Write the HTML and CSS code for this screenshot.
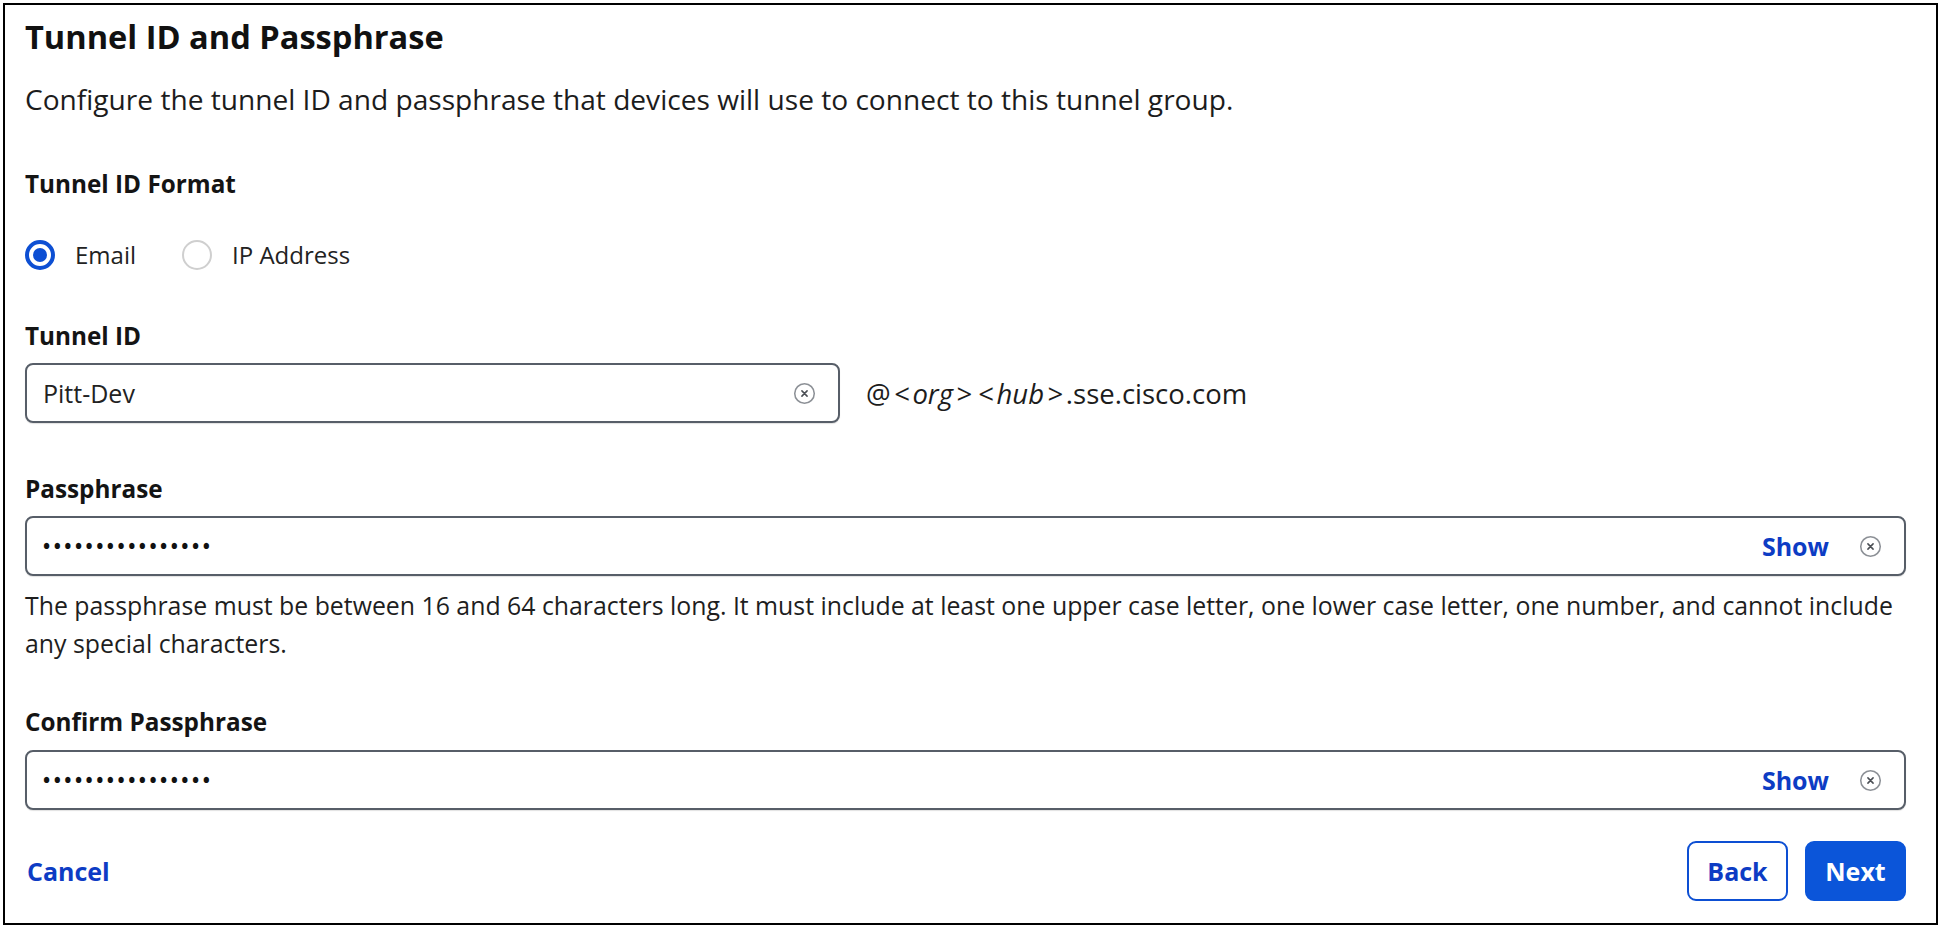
FILE: index.html
```html
<!DOCTYPE html>
<html lang="en">
<head>
<meta charset="utf-8">
<title>Tunnel ID and Passphrase</title>
<link rel="stylesheet" href="styles.css">
</head>
<body>
<div class="frame">
  <h1 class="title">Tunnel ID and Passphrase</h1>
  <p class="desc">Configure the tunnel ID and passphrase that devices will use to connect to this tunnel group.</p>

  <div class="label label-format">Tunnel ID Format</div>
  <div class="radios">
    <div class="radio"><span class="radio-dot radio-on"></span><span class="radio-text">Email</span></div>
    <div class="radio"><span class="radio-dot"></span><span class="radio-text">IP Address</span></div>
  </div>

  <div class="label label-id">Tunnel ID</div>
  <div class="id-row">
    <div class="field field-short">
      <span class="value">Pitt-Dev</span>
      <svg class="clear" viewBox="0 0 24 24" width="23" height="23" aria-hidden="true">
        <circle cx="12" cy="12" r="10.2" fill="none" stroke="#8c9096" stroke-width="1.6"/>
        <path d="M9.3 9.3 L14.7 14.7 M14.7 9.3 L9.3 14.7" stroke="#4a4e54" stroke-width="1.6" stroke-linecap="round"/>
      </svg>
    </div>
    <span class="suffix">@<i><span class="br">&lt;</span>org<span class="br">&gt;</span><span class="br">&lt;</span>hub<span class="br">&gt;</span></i>.sse.cisco.com</span>
  </div>

  <div class="label label-pass">Passphrase</div>
  <div class="field field-pass">
    <span class="dots">••••••••••••••••</span>
    <span class="field-actions">
      <span class="show">Show</span>
      <svg class="clear" viewBox="0 0 24 24" width="23" height="23" aria-hidden="true">
        <circle cx="12" cy="12" r="10.2" fill="none" stroke="#8c9096" stroke-width="1.6"/>
        <path d="M9.3 9.3 L14.7 14.7 M14.7 9.3 L9.3 14.7" stroke="#4a4e54" stroke-width="1.6" stroke-linecap="round"/>
      </svg>
    </span>
  </div>
  <p class="help">The passphrase must be between 16 and 64 characters long. It must include at least one upper case letter, one lower case letter, one number, and cannot include any special characters.</p>

  <div class="label label-confirm">Confirm Passphrase</div>
  <div class="field field-pass field-confirm">
    <span class="dots">••••••••••••••••</span>
    <span class="field-actions">
      <span class="show">Show</span>
      <svg class="clear" viewBox="0 0 24 24" width="23" height="23" aria-hidden="true">
        <circle cx="12" cy="12" r="10.2" fill="none" stroke="#8c9096" stroke-width="1.6"/>
        <path d="M9.3 9.3 L14.7 14.7 M14.7 9.3 L9.3 14.7" stroke="#4a4e54" stroke-width="1.6" stroke-linecap="round"/>
      </svg>
    </span>
  </div>

  <div class="footer">
    <span class="cancel">Cancel</span>
    <div class="actions">
      <button class="btn btn-outline" type="button">Back</button>
      <button class="btn btn-primary" type="button">Next</button>
    </div>
  </div>
</div>
</body>
</html>
```

FILE: styles.css
```css
html, body {
  margin: 0;
  padding: 0;
  background: #ffffff;
}

body {
  font-family: "Open Sans", "Noto Sans", sans-serif;
  color: #1c1c1c;
}

.frame {
  box-sizing: border-box;
  margin: 3px 0 0 3px;
  width: 1935px;
  height: 922px;
  border: 2px solid #000;
  padding: 12px 30px 0 20px;
  display: flex;
  flex-direction: column;
}

.title {
  margin: 0;
  font-size: 32.6px;
  line-height: 40px;
  font-weight: 700;
  color: #111;
}

.desc {
  margin: 23px 0 0;
  font-size: 28.1px;
  line-height: 38px;
  color: #1c1c1c;
}

.label {
  font-size: 24.3px;
  line-height: 34px;
  font-weight: 700;
  color: #141414;
}

.label-format { margin-top: 49px; }
.label-id { margin-top: 47px; }
.label-pass { margin-top: 49px; }
.label-confirm { margin-top: 43px; }

.radios {
  margin-top: 37px;
  height: 34px;
  display: flex;
  align-items: center;
  gap: 46px;
}

.radio {
  display: flex;
  align-items: center;
  gap: 20px;
}

.radio-dot {
  box-sizing: border-box;
  width: 30px;
  height: 30px;
  border-radius: 50%;
  border: 2px solid #cfcfcf;
  background: #fff;
  display: flex;
  align-items: center;
  justify-content: center;
}

.radio-on {
  border: 4px solid #0d4fd3;
}

.radio-on::after {
  content: "";
  width: 14px;
  height: 14px;
  border-radius: 50%;
  background: #0d4fd3;
}

.radio-text {
  font-size: 24px;
  line-height: 34px;
  color: #222;
}

.id-row {
  margin-top: 10px;
  display: flex;
  align-items: center;
  gap: 26px;
}

.field {
  box-sizing: border-box;
  height: 60px;
  border: 2px solid #575e68;
  border-radius: 8px;
  padding: 0 22px 0 16px;
  display: flex;
  align-items: center;
  justify-content: space-between;
  background: #fff;
  box-shadow: 0 1px 1px rgba(0, 0, 0, 0.12);
}

.field-short {
  width: 815px;
}

.field-pass {
  margin-top: 10px;
  width: 100%;
}

.field-confirm {
  margin-top: 11px;
}

.value {
  font-size: 25px;
  color: #222;
}

.clear {
  display: block;
  flex: none;
}

.suffix {
  font-size: 27.5px;
  color: #1c1c1c;
}

.suffix i {
  font-style: italic;
}

.suffix .br {
  margin: 0 3px;
}

.dots {
  font-size: 19px;
  letter-spacing: 3.5px;
  color: #111;
  font-weight: 700;
}

.field-actions {
  display: flex;
  align-items: center;
  gap: 30px;
}

.show {
  font-size: 25px;
  font-weight: 700;
  color: #0d3cc4;
}

.help {
  margin: 10px 0 0;
  font-size: 24.85px;
  line-height: 38px;
  color: #1e1e1e;
}

.footer {
  margin-top: 31px;
  display: flex;
  align-items: center;
  justify-content: space-between;
}

.cancel {
  margin-left: 2px;
  font-size: 25px;
  font-weight: 700;
  color: #0d3cc4;
}

.actions {
  display: flex;
  gap: 17px;
}

.btn {
  box-sizing: border-box;
  width: 101px;
  height: 60px;
  border-radius: 9px;
  font-family: "Open Sans", "Noto Sans", sans-serif;
  font-size: 25px;
  font-weight: 700;
  cursor: pointer;
}

.btn-outline {
  background: #fff;
  border: 2px solid #0d4fd3;
  color: #0d3cc4;
}

.btn-primary {
  background: #0b55d9;
  border: 2px solid #0b55d9;
  color: #fff;
}
```
